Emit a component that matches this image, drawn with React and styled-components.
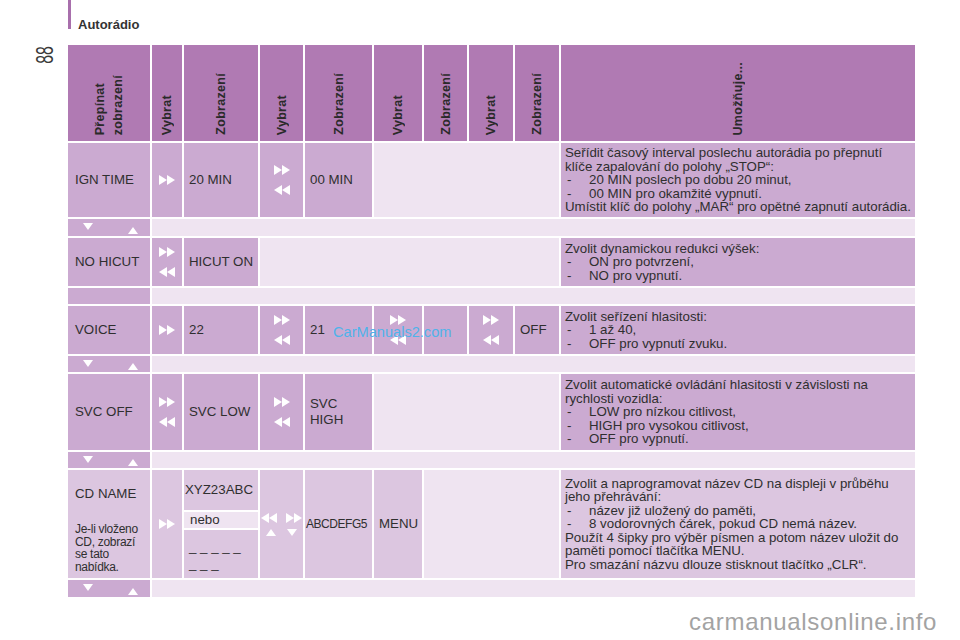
import React from "react";
import styled, { createGlobalStyle } from "styled-components";

const GlobalStyle = createGlobalStyle`
  body {
    margin: 0;
    background: #fff;
    font-family: "Liberation Sans", Arial, sans-serif;
    color: #2f2f2f;
  }
`;

const tones = {
  head: "#b07ab3",
  cell: "#cbaad1",
  pale: "#efe4f1",
  light: "#dcc6e0",
};

const Page = styled.div`
  position: relative;
  width: 960px;
  height: 640px;
  display: flex;
  overflow: hidden;
`;

const Gutter = styled.div`
  width: 68px;
  flex: none;
  display: flex;
  flex-direction: column;
  align-items: flex-start;
  box-sizing: border-box;
  padding: 46px 0 0 36px;
`;

const PageNumber = styled.div`
  width: 18px;
  height: 17px;
  display: flex;
  align-items: center;
  justify-content: center;
  font-size: 24px;
  line-height: 18px;
  color: #3a3a3a;
`;

const NumberText = styled.span`
  display: block;
  transform: rotate(-90deg) scaleX(0.66);
  white-space: nowrap;
`;

const Main = styled.div`
  display: flex;
  flex-direction: column;
`;

const TitleRow = styled.div`
  display: flex;
  align-items: flex-end;
  height: 29px;
`;

const TitleBar = styled.div`
  width: 3px;
  align-self: stretch;
  background: #a86fac;
`;

const Title = styled.div`
  margin: 0 0 -2px 7px;
  font-weight: bold;
  font-size: 13px;
  line-height: 13px;
  color: #333;
`;

const Table = styled.div`
  margin-top: 16px;
  display: grid;
  grid-template-columns: 82px 30px 74px 43px 67px 48px 43px 44px 44px 354px;
  grid-template-rows: 96px 74px 17px 48px 16px 48px 16px 76px 16px 108px 17px;
  gap: 2px;
  background: #fff;
`;

const HeadCell = styled.div`
  background: ${tones.head};
  display: flex;
  justify-content: center;
  align-items: flex-end;
  padding-bottom: 6px;
`;

const HeadText = styled.span`
  writing-mode: vertical-rl;
  transform: rotate(180deg);
  font-weight: bold;
  font-size: 12.5px;
  letter-spacing: 0.3px;
  line-height: 18px;
  color: #2a2a2a;
  white-space: pre;
`;

const Cell = styled.div`
  grid-column: span ${(p) => p.$span || 1};
  background: ${(p) => tones[p.$tone || "cell"]};
  display: flex;
  flex-direction: column;
  justify-content: center;
  padding: 0 ${(p) => (p.$pad === undefined ? 5 : p.$pad)}px;
  font-size: 13.3px;
  line-height: 16px;
  white-space: nowrap;
`;

const ArrowCell = styled(Cell)`
  align-items: center;
  gap: 10px;
  padding: 0;
`;

const ArrowLine = styled.div`
  display: flex;
  gap: ${(p) => p.$gap || 9}px;
  align-items: center;
`;

const QuadArrows = styled.div`
  display: flex;
  flex-direction: column;
  align-items: center;
  gap: 6px;
`;

const NavCell = styled.div`
  background: ${tones.cell};
  display: flex;
  justify-content: space-between;
  padding: 4px 12px 2px 15px;
`;

const NavDown = styled.div`
  align-self: flex-start;
  display: flex;
`;

const NavUp = styled.div`
  align-self: flex-end;
  display: flex;
`;

const Desc = styled(Cell)`
  padding: 0 4px;
  line-height: 13.5px;
`;

const Line = styled.div`
  white-space: nowrap;
`;

const Bullet = styled.div`
  display: flex;
  white-space: nowrap;
`;

const Dash = styled.span`
  width: 22px;
  padding-left: 2px;
  flex: none;
`;

const CdLabel = styled(Cell)`
  justify-content: flex-start;
  padding: 16px 0 0 7px;
`;

const CdNote = styled.div`
  margin-top: 21px;
  font-size: 12px;
  letter-spacing: -0.3px;
  line-height: 12.7px;
`;

const Stack = styled.div`
  display: flex;
  flex-direction: column;
  gap: 2px;
`;

const SubCell = styled.div`
  height: ${(p) => p.$h}px;
  background: ${(p) => tones[p.$tone || "light"]};
  display: flex;
  flex-direction: column;
  justify-content: ${(p) => p.$align || "center"};
  padding: ${(p) => p.$padTop || 0}px 5px 0 ${(p) => p.$padLeft || 5}px;
  font-size: 13.3px;
  line-height: ${(p) => p.$lh || 16}px;
  white-space: nowrap;
`;

const Condensed = styled.span`
  font-size: 12px;
  letter-spacing: -0.45px;
`;

const Watermark = styled.div`
  position: absolute;
  left: 333px;
  top: 324px;
  font-size: 14.6px;
  line-height: 16px;
  color: #4fb3ea;
`;

const SiteMark = styled.div`
  position: absolute;
  left: 689px;
  top: 609px;
  font-size: 24px;
  letter-spacing: 0.7px;
  line-height: 26px;
  color: #a3a3a3;
`;

function Tri({ dir }) {
  const pts = {
    down: "0,0 10,0 5,7",
    up: "5,0 10,7 0,7",
  };
  return (
    <svg width="10" height="7" viewBox="0 0 10 7">
      <polygon points={pts[dir]} fill="#fff" />
    </svg>
  );
}

function Double({ back }) {
  return (
    <svg width="16" height="10" viewBox="0 0 16 10">
      {back ? (
        <g fill="#fff">
          <polygon points="8,0 8,10 0,5" />
          <polygon points="16,0 16,10 8,5" />
        </g>
      ) : (
        <g fill="#fff">
          <polygon points="0,0 8,5 0,10" />
          <polygon points="8,0 16,5 8,10" />
        </g>
      )}
    </svg>
  );
}

function Arrows({ both, tone }) {
  return (
    <ArrowCell $tone={tone}>
      <Double />
      {both && <Double back />}
    </ArrowCell>
  );
}

function NavRow({ arrows = true }) {
  return (
    <>
      <NavCell>
        {arrows && (
          <>
            <NavDown>
              <Tri dir="down" />
            </NavDown>
            <NavUp>
              <Tri dir="up" />
            </NavUp>
          </>
        )}
      </NavCell>
      <Cell $tone="pale" $span={9} />
    </>
  );
}

function Description({ lines, tone }) {
  return (
    <Desc $tone={tone}>
      {lines.map((l, i) =>
        typeof l === "string" ? (
          <Line key={i}>{l}</Line>
        ) : (
          <Bullet key={i}>
            <Dash>-</Dash>
            {l.b}
          </Bullet>
        )
      )}
    </Desc>
  );
}

const heads = [
  "Přepínat\nzobrazení",
  "Vybrat",
  "Zobrazení",
  "Vybrat",
  "Zobrazení",
  "Vybrat",
  "Zobrazení",
  "Vybrat",
  "Zobrazení",
  "Umožňuje...",
];

const texts = {
  ign: [
    "Seřídit časový interval poslechu autorádia po přepnutí",
    "klíče zapalování do polohy „STOP“:",
    { b: "20 MIN poslech po dobu 20 minut," },
    { b: "00 MIN pro okamžité vypnutí." },
    "Umístit klíč do polohy „MAR“ pro opětné zapnutí autorádia.",
  ],
  hicut: [
    "Zvolit dynamickou redukci výšek:",
    { b: "ON pro potvrzení," },
    { b: "NO pro vypnutí." },
  ],
  voice: [
    "Zvolit seřízení hlasitosti:",
    { b: "1 až 40," },
    { b: "OFF pro vypnutí zvuku." },
  ],
  svc: [
    "Zvolit automatické ovládání hlasitosti v závislosti na",
    "rychlosti vozidla:",
    { b: "LOW pro nízkou citlivost," },
    { b: "HIGH pro vysokou citlivost," },
    { b: "OFF pro vypnutí." },
  ],
  cd: [
    "Zvolit a naprogramovat název CD na displeji v průběhu",
    "jeho přehrávání:",
    { b: "název již uložený do paměti," },
    { b: "8 vodorovných čárek, pokud CD nemá název." },
    "Použít 4 šipky pro výběr písmen a potom název uložit do",
    "paměti pomocí tlačítka MENU.",
    "Pro smazání názvu dlouze stisknout tlačítko „CLR“.",
  ],
};

export default function App() {
  return (
    <Page>
      <GlobalStyle />
      <Gutter>
        <PageNumber>
          <NumberText>88</NumberText>
        </PageNumber>
      </Gutter>
      <Main>
        <TitleRow>
          <TitleBar />
          <Title>Autorádio</Title>
        </TitleRow>
        <Table>
          {heads.map((h, i) => (
            <HeadCell key={i}>
              <HeadText>{h}</HeadText>
            </HeadCell>
          ))}

          <Cell $pad={7}>IGN TIME</Cell>
          <Arrows />
          <Cell>20 MIN</Cell>
          <Arrows both />
          <Cell>00 MIN</Cell>
          <Cell $tone="pale" $span={4} />
          <Description lines={texts.ign} />
          <NavRow />

          <Cell $pad={7}>NO HICUT</Cell>
          <Arrows both />
          <Cell>HICUT ON</Cell>
          <Cell $tone="pale" $span={6} />
          <Description lines={texts.hicut} />
          <NavRow arrows={false} />

          <Cell $pad={7}>VOICE</Cell>
          <Arrows />
          <Cell>22</Cell>
          <Arrows both />
          <Cell>21</Cell>
          <Arrows both />
          <Cell />
          <Arrows both />
          <Cell>OFF</Cell>
          <Description lines={texts.voice} />
          <NavRow />

          <Cell $pad={7}>SVC OFF</Cell>
          <Arrows both />
          <Cell>SVC LOW</Cell>
          <Arrows both />
          <Cell>
            <div>SVC</div>
            <div>HIGH</div>
          </Cell>
          <Cell $tone="pale" $span={4} />
          <Description lines={texts.svc} />
          <NavRow />

          <CdLabel $tone="light">
            <div>CD NAME</div>
            <CdNote>
              <div>Je-li vloženo</div>
              <div>CD, zobrazí</div>
              <div>se tato</div>
              <div>nabídka.</div>
            </CdNote>
          </CdLabel>
          <Arrows tone="light" />
          <Stack>
            <SubCell $h={45} $padLeft={1}>XYZ23ABC</SubCell>
            <SubCell $h={17} $tone="pale" $padLeft={6}>nebo</SubCell>
            <SubCell $h={44} $align="flex-start" $padTop={8} $lh={17}>
              <div>_ _ _ _ _</div>
              <div>_ _ _</div>
            </SubCell>
          </Stack>
          <ArrowCell $tone="light">
            <QuadArrows>
              <ArrowLine>
                <Double back />
                <Double />
              </ArrowLine>
              <ArrowLine $gap={11}>
                <Tri dir="up" />
                <Tri dir="down" />
              </ArrowLine>
            </QuadArrows>
          </ArrowCell>
          <Cell $tone="light" $pad={1}>
            <Condensed>ABCDEFG5</Condensed>
          </Cell>
          <Cell $tone="light">MENU</Cell>
          <Cell $tone="pale" $span={3} />
          <Description lines={texts.cd} tone="light" />
          <NavRow />
        </Table>
      </Main>
      <Watermark>CarManuals2.com</Watermark>
      <SiteMark>carmanualsonline.info</SiteMark>
    </Page>
  );
}
